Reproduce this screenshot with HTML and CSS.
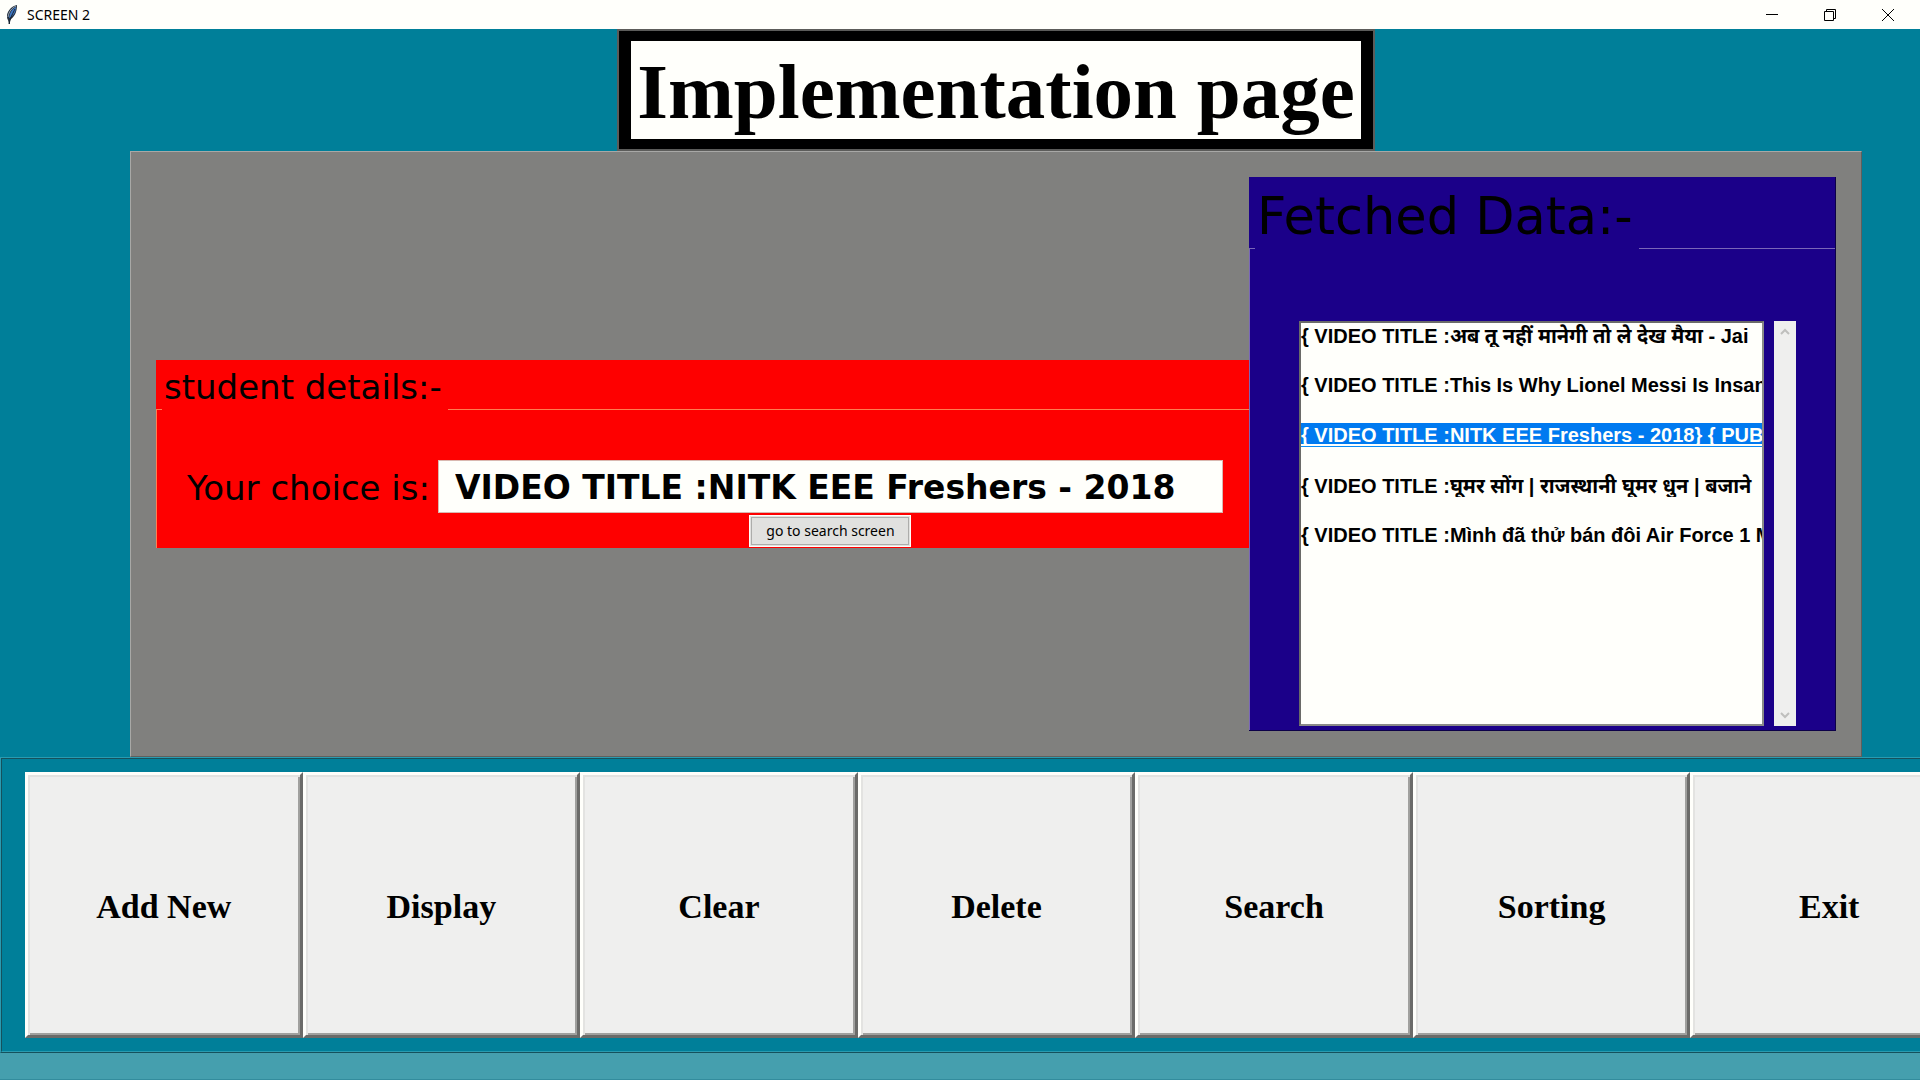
FILE: index.html
```html
<!DOCTYPE html>
<html lang="en">
<head>
<meta charset="utf-8">
<title>SCREEN 2</title>
<link rel="stylesheet" href="styles.css">
</head>
<body>
<header class="titlebar">
  <svg class="feather" viewBox="0 0 12 20" aria-hidden="true">
    <path d="M11 0 C6 1 2 5 1 10 C1 12 1 14 2 15 L3 19 L4 19 L4 15 C8 12 11 8 11 0Z" fill="#24303f"/>
    <path d="M10 2 C6 4 4 7 3 13 C7 11 10 8 10 2Z" fill="#3f78c4"/>
    <path d="M10 1 C6 3 3 6 2 12" stroke="#9aa6b4" fill="none"/>
    <path d="M9 4 C7 8 5 11 3 19" stroke="#16202c" fill="none"/>
  </svg>
  <span class="caption">SCREEN 2</span>
  <div class="window-buttons">
    <button type="button" aria-label="Minimize"><svg viewBox="0 0 12 12"><path d="M0 5.5H12"/></svg></button>
    <button type="button" aria-label="Restore"><svg viewBox="0 0 12 12"><path d="M.5 2.5H9.5V11.5H.5ZM2.5 2.5V.5H11.5V9.5H9.5"/></svg></button>
    <button type="button" aria-label="Close"><svg viewBox="0 0 12 12"><path d="M0 0L12 12M12 0L0 12"/></svg></button>
  </div>
</header>

<main class="screen">
  <h1 class="heading">Implementation page</h1>

  <section class="workspace">
    <section class="panel details">
      <div class="panel-head"><h2>student details:-</h2></div>
      <div class="details-body">
        <label for="choice">Your choice is:</label>
        <input id="choice" type="text" value="VIDEO TITLE :NITK EEE Freshers - 2018">
        <button type="button" class="goto">go to search screen</button>
      </div>
    </section>

    <section class="panel fetched">
      <div class="panel-head"><h2 id="fetched-title">Fetched Data:-</h2></div>
      <div class="fetched-body">
        <select class="results" size="10" aria-labelledby="fetched-title">
          <option>{ VIDEO TITLE :अब तू नहीं मानेगी तो ले देख मैया - Jai</option>
          <option>{ VIDEO TITLE :This Is Why Lionel Messi Is Insane</option>
          <option selected>{ VIDEO TITLE :NITK EEE Freshers - 2018} { PUB</option>
          <option>{ VIDEO TITLE :घूमर सोंग | राजस्थानी घूमर धुन | बजाने</option>
          <option>{ VIDEO TITLE :Mình đã thử bán đôi Air Force 1 M</option>
        </select>
        <div class="scrollbar">
          <button type="button" aria-label="Scroll up"><svg viewBox="0 0 10 10"><path d="M1 7L5 3L9 7"/></svg></button>
          <button type="button" aria-label="Scroll down"><svg viewBox="0 0 10 10"><path d="M1 3L5 7L9 3"/></svg></button>
        </div>
      </div>
    </section>
  </section>
</main>

<nav class="actions">
  <div class="action-grid">
    <button type="button">Add New</button>
    <button type="button">Display</button>
    <button type="button">Clear</button>
    <button type="button">Delete</button>
    <button type="button">Search</button>
    <button type="button">Sorting</button>
    <button type="button">Exit</button>
  </div>
</nav>
<footer class="strip"></footer>
</body>
</html>
```
FILE: styles.css
```css
* { box-sizing: border-box; }

body {
  margin: 0;
  min-height: 100vh;
  display: flex;
  flex-direction: column;
  overflow-x: hidden;
  background: #007f99;
  color: #000;
}

h1, h2 { margin: 0; }

button { font: inherit; color: inherit; }

/* Window title bar */
.titlebar {
  display: flex;
  align-items: center;
  height: 29px;
  padding-left: 6px;
  background: #fffffb;
  font: 14px/28px "Segoe UI", "Noto Sans", sans-serif;
}

.feather { width: 12px; height: 20px; }

.caption { margin-left: 9px; }

.window-buttons { display: flex; margin-left: auto; }

.window-buttons button {
  display: grid;
  place-items: center;
  width: 58px;
  height: 28px;
  padding: 0 6px 0 0;
  border: 0;
  background: none;
}

.window-buttons svg {
  width: 12px;
  height: 12px;
  fill: none;
  stroke: #000;
}

/* Heading and work area */
.screen { padding: 0 58px 0 130px; }

.heading {
  width: fit-content;
  margin: 0 auto;
  padding: 4px 6px 0;
  border: solid #000;
  border-width: 12px 14px;
  outline: 2px solid #5c5c5a;
  outline-offset: -2px;
  background: #fffffb;
  font: bold 79px/94px "Times New Roman", "Liberation Serif", serif;
}

.workspace {
  display: flex;
  align-items: center;
  padding: 25px;
  border: 1px solid;
  border-color: #a8a8a6 #5f5f5d #5f5f5d #a8a8a6;
  background: #80807e;
}

/* Labelled panels: the title sits above a rule that breaks under it */
.panel-head { display: flex; align-items: flex-end; }

.panel-head::before,
.panel-head::after {
  content: "";
  height: 1px;
  background: var(--rule);
}

.panel-head::before { width: 6px; }

.panel-head::after { flex: 1; margin-left: 6px; }

.panel-head h2 { padding-left: 2px; font-weight: normal; }

.details {
  --rule: #ff7d50;
  flex: 1;
  background: #fe0000;
  font: 34px/50px "Comic Sans MS", "DejaVu Sans", sans-serif;
}

.details h2 {
  padding-top: 4px;
  font-size: 34px;
  line-height: 46px;
}

.details-body {
  display: grid;
  grid-template-columns: auto 1fr;
  column-gap: 8px;
  row-gap: 2px;
  padding: 50px 26px 1px 30px;
  border-left: 1px solid var(--rule);
}

.details label { padding-top: 3px; }

.details input {
  min-width: 0;
  height: 53px;
  padding: 2px 16px 0;
  border: 1px solid #d9b8b0;
  background: #fffffb;
  color: #000;
  font: bold 33px/48px "Comic Sans MS", "DejaVu Sans", sans-serif;
}

.goto {
  grid-column: 2;
  justify-self: center;
  width: 162px;
  height: 32px;
  padding: 0;
  border: 1px solid #fffffb;
  outline: 1px solid #adadab;
  outline-offset: -3px;
  background: #e1e1df;
  font: 14px/28px "Segoe UI", "Noto Sans", sans-serif;
}

.fetched {
  --rule: #7a66b8;
  width: 587px;
  border-right: 1px solid #0c0048;
  border-bottom: 1px solid #0c0048;
  background: #1b0089;
}

.fetched h2 {
  padding-top: 8px;
  font: 51px/64px "Comic Sans MS", "DejaVu Sans", sans-serif;
}

.fetched-body {
  display: flex;
  gap: 10px;
  padding: 72px 39px 4px 49px;
  border-left: 1px solid var(--rule);
}

.results {
  flex: 1;
  min-width: 0;
  height: 405px;
  padding: 0;
  border: 2px solid;
  border-color: #6a6a68 #8a8a88 #8a8a88 #6a6a68;
  border-radius: 0;
  outline: 0;
  overflow: hidden;
  background: #fffffb;
  color: #000;
  font: bold 20px/24px Arial, "Liberation Sans", "Noto Sans", sans-serif;
}

.results option {
  display: flex;
  align-items: center;
  height: 24px;
  min-height: 24px;
  margin-bottom: 26px;
  padding: 0;
  font-weight: bold;
  line-height: 24px;
  white-space: pre;
  overflow: hidden;
}

.results option:checked {
  background: linear-gradient(#007af0 21px, #fffffb 21px, #fffffb 23px, #0a8cf5 23px);
  color: #fffffb;
}

.scrollbar {
  display: flex;
  flex-direction: column;
  justify-content: space-between;
  width: 22px;
  background: #efefee;
}

.scrollbar button {
  display: grid;
  place-items: center;
  height: 22px;
  padding: 0;
  border: 0;
  background: none;
}

.scrollbar svg {
  width: 10px;
  height: 10px;
  fill: none;
  stroke: #bfbfbd;
  stroke-width: 2;
}

/* Bottom button bar; the last button runs past the window edge */
.actions {
  padding: 13px 0 13px 23px;
  border: 2px ridge #2a9bb0;
  border-right: 0;
  overflow: hidden;
}

.action-grid {
  display: grid;
  grid-template-columns: repeat(7, 1fr);
  margin-right: -48px;
}

.action-grid button {
  height: 266px;
  padding: 3px 0 0;
  border: 3px solid;
  border-color: #fffffb #6b6b69 #6b6b69 #fffffb;
  background: #efefee;
  box-shadow: inset 2px 2px #e3e3e1, inset -2px -2px #a0a09e;
  font: bold 34px/40px "Times New Roman", "Liberation Serif", serif;
}

.strip {
  flex: 1;
  min-height: 24px;
  border-bottom: 1px solid #338c9d;
  background: #459fae;
}
```
